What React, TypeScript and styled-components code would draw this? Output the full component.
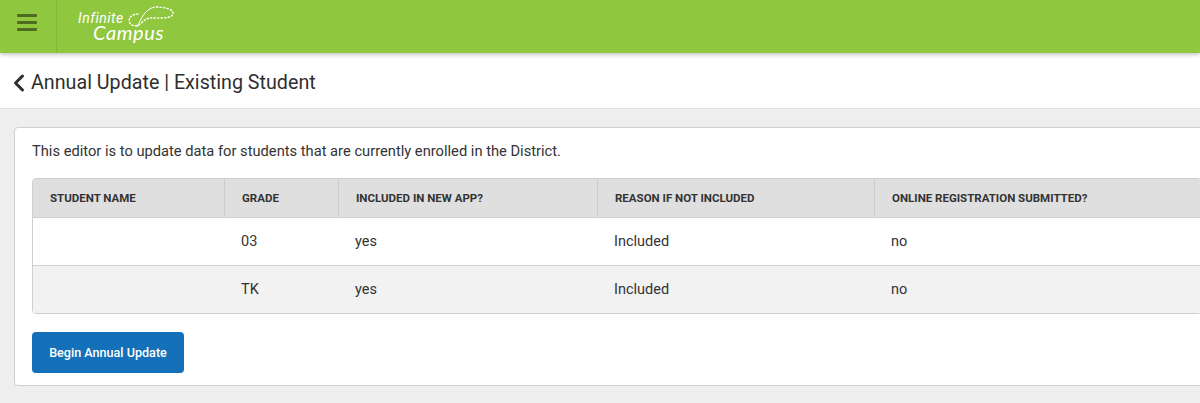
import { ChevronLeft } from "lucide-react";
import styled, { createGlobalStyle } from "styled-components";

const GlobalStyle = createGlobalStyle`
  html, body {
    margin: 0;
    height: 403px;
    overflow: hidden;
    background: #eeeeee;
    font-family: Roboto, "Liberation Sans", sans-serif;
    color: #2b2b2b;
  }
`;

const TopBar = styled.header`
  display: flex;
  height: 53px;
  background: #8fc73e;
  box-shadow: 0 1px 5px rgba(0, 0, 0, 0.3);
  position: relative;
`;

const MenuButton = styled.div`
  width: 57px;
  border-right: 1px solid #82b638;
  display: flex;
  flex-direction: column;
  gap: 4px;
  align-items: center;
  justify-content: center;
  padding: 0 3px 9px 0;
  box-sizing: border-box;
`;

const MenuLine = styled.span`
  width: 20px;
  height: 3px;
  border-radius: 1px;
  background: #4f6a22;
`;

const Logo = styled.div`
  position: relative;
  width: 110px;
  margin-left: 21px;
  color: #fff;
`;

const LogoTop = styled.span`
  position: absolute;
  left: 0;
  top: 12px;
  font-size: 14px;
  line-height: 12px;
  font-style: italic;
  letter-spacing: 0.5px;
`;

const LogoBottom = styled.span`
  position: absolute;
  left: 15px;
  top: 24px;
  font-family: Lato, sans-serif;
  font-size: 20px;
  line-height: 16px;
  font-weight: 400;
  font-style: italic;
  letter-spacing: 0.6px;
`;

const LogoSwirl = styled.svg`
  position: absolute;
  left: 50px;
  top: 5px;
`;

const TitleBar = styled.div`
  display: flex;
  align-items: center;
  height: 56px;
  padding: 4px 0 0 5px;
  box-sizing: border-box;
  background: #fff;
  border-bottom: 1px solid #e2e2e2;
`;

const Title = styled.h1`
  margin: 0 0 0 -2px;
  font-size: 19.7px;
  font-weight: 400;
  color: #2f2f2f;
`;

const Card = styled.section`
  margin: 18px -20px 0 14px;
  height: 259px;
  box-sizing: border-box;
  padding: 14px 17px 0;
  background: #fff;
  border: 1px solid #cfcfcf;
  border-radius: 4px;
`;

const Intro = styled.p`
  margin: 0 0 18px;
  font-size: 14.7px;
  line-height: 18px;
  color: #333;
`;

const Table = styled.div`
  border: 1px solid #cfcfcf;
  border-radius: 4px;
  overflow: hidden;
`;

const Row = styled.div<{ $head?: boolean; $shaded?: boolean }>`
  display: grid;
  grid-template-columns: 191px 114px 259px 277px 1fr;
  height: ${(p) => (p.$head ? "38px" : "47px")};
  align-items: stretch;
  background: ${(p) => (p.$head ? "#dfdfdf" : p.$shaded ? "#f2f2f2" : "#fff")};
  & + & {
    border-top: 1px solid #cfcfcf;
  }
`;

const HeadCell = styled.div`
  display: flex;
  align-items: center;
  padding-left: 17px;
  font-size: 11.5px;
  font-weight: 700;
  color: #333;
  & + & {
    border-left: 1px solid #cbcbcb;
  }
`;

const Cell = styled.div`
  display: flex;
  align-items: center;
  padding-left: 17px;
  font-size: 14.5px;
  color: #333;
`;

const PrimaryButton = styled.button`
  display: block;
  margin-top: 18px;
  width: 152px;
  height: 41px;
  padding: 0;
  border: none;
  border-radius: 4px;
  background: #1470b8;
  color: #fff;
  font-family: inherit;
  font-size: 12.6px;
  font-weight: 500;
`;

const columns = [
  "Student Name",
  "Grade",
  "Included in New App?",
  "Reason if not included",
  "Online Registration Submitted?",
];

const students = [
  { grade: "03", included: "yes", reason: "Included", submitted: "no" },
  { grade: "TK", included: "yes", reason: "Included", submitted: "no" },
];

export default function App() {
  return (
    <>
      <GlobalStyle />
      <TopBar>
        <MenuButton>
          <MenuLine />
          <MenuLine />
          <MenuLine />
        </MenuButton>
        <Logo>
          <LogoTop>Infinite</LogoTop>
          <LogoBottom>Campus</LogoBottom>
          <LogoSwirl width="48" height="26" viewBox="0 0 48 26" fill="none" stroke="#fff">
            <path d="M9 22 C13 15 16 4 27 2" strokeWidth="1" />
            <path d="M10 9 C5 9 1 12 1 16 C2 21 8 22 12 19 C16 16 18 13 23 13 C30 13 44 14 45 9 C46 4 36 2 27 2" strokeWidth="1.4" strokeDasharray="1.3 2.2" strokeLinecap="round" />
          </LogoSwirl>
        </Logo>
      </TopBar>
      <TitleBar>
        <ChevronLeft size={28} strokeWidth={2.6} color="#2f2f2f" />
        <Title>Annual Update | Existing Student</Title>
      </TitleBar>
      <Card>
        <Intro>This editor is to update data for students that are currently enrolled in the District.</Intro>
        <Table>
          <Row $head>
            {columns.map((c) => (
              <HeadCell key={c}>{c.toUpperCase()}</HeadCell>
            ))}
          </Row>
          {students.map((s, i) => (
            <Row key={s.grade} $shaded={i % 2 === 1}>
              <Cell />
              <Cell>{s.grade}</Cell>
              <Cell>{s.included}</Cell>
              <Cell>{s.reason}</Cell>
              <Cell>{s.submitted}</Cell>
            </Row>
          ))}
        </Table>
        <PrimaryButton>Begin Annual Update</PrimaryButton>
      </Card>
    </>
  );
}
